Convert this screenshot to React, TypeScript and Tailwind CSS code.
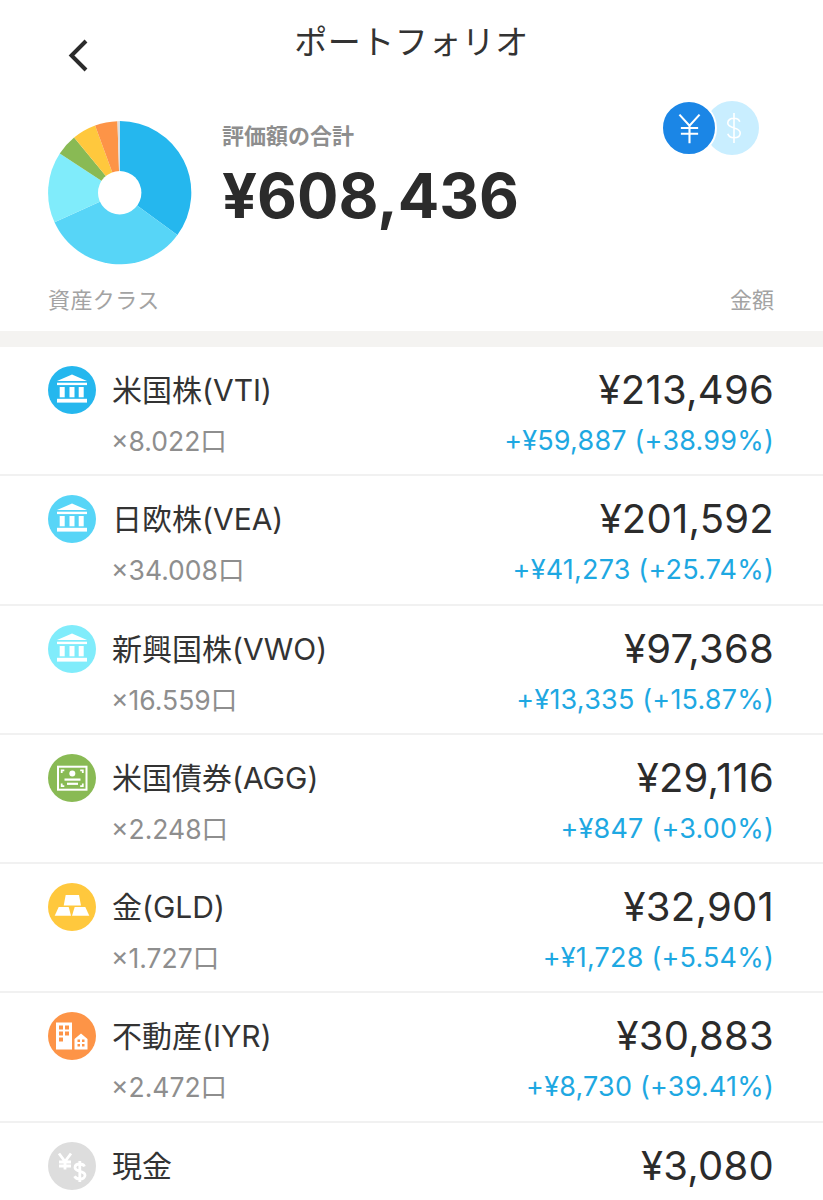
const FONT = "font-['Inter','Noto_Sans_CJK_JP',sans-serif]";

function polar(r: number, pct: number) {
  const a = (pct / 100) * 2 * Math.PI;
  return [r * Math.sin(a), -r * Math.cos(a)];
}

function Pie() {
  const slices: [number, string][] = [
    [35.09, "#25b7ee"],
    [33.13, "#57d5f7"],
    [16.0, "#80ecfb"],
    [4.79, "#89ba54"],
    [5.41, "#ffc83d"],
    [5.08, "#fd9447"],
    [0.5, "#dddddd"],
  ];
  const R = 71.6;
  let acc = 0;
  return (
    <svg width="144" height="144" viewBox="-71.700 -71.700 144 144" className="shrink-0">
      {slices.map(([p, c]) => {
        const [x1, y1] = polar(R, acc);
        acc += p;
        const [x2, y2] = polar(R, acc);
        return <path key={c} d={`M0 0L${x1} ${y1}A${R} ${R} 0 ${p > 50 ? 1 : 0} 1 ${x2} ${y2}Z`} fill={c} />;
      })}
      <circle r="21.7" fill="#fff" />
    </svg>
  );
}

function Bank() {
  return (
    <svg viewBox="0 0 48 48" className="w-12 h-12" fill="#fff">
      <path d="M24 8.500 L39 15 H9Z" />
      <rect x="9" y="16.700" width="30" height="2.400" />
      <rect x="11.700" y="21" width="5" height="10.300" />
      <rect x="21.500" y="21" width="5" height="10.300" />
      <rect x="30.700" y="21" width="5" height="10.300" />
      <rect x="9" y="32.800" width="30" height="3.800" />
    </svg>
  );
}
function Bond() {
  return (
    <svg viewBox="0 0 48 48" className="w-12 h-12">
      <rect x="10" y="12.700" width="28.500" height="23" fill="none" stroke="#fff" strokeWidth="2" />
      <path d="M12.800 15.500h3.500v1.800h-1.700V19h-1.800zM35.700 15.500h-3.500v1.800h1.700V19h1.800zM12.800 33h3.500v-1.800h-1.700v-1.700h-1.800zM35.700 33h-3.500v-1.800h1.700v-1.700h1.800z" fill="#fff" />
      <circle cx="24.300" cy="19.500" r="3" fill="#fff" />
      <rect x="16.500" y="24.500" width="16" height="2.200" fill="#fff" />
      <rect x="19" y="28.700" width="11" height="2.200" fill="#fff" />
    </svg>
  );
}
function Gold() {
  return (
    <svg viewBox="0 0 48 48" className="w-12 h-12" fill="#fff">
      <path d="M17.700 12h13.300l2 10.500H15.700z" />
      <path d="M10.700 24h10l2.300 8.700H6.700z" />
      <path d="M26.700 24h10.600l4 8.700H24z" />
    </svg>
  );
}
function Estate() {
  return (
    <svg viewBox="0 0 48 48" className="w-12 h-12">
      <path fillRule="evenodd" fill="#fff" d="M8 10.500h16v27H8zM11 13.500v4h4v-4zM17 13.500v4h4v-4zM11 19.500v4h4v-4zM17 19.500v4h4v-4zM11 25.500v4h4v-4z" />
      <path fillRule="evenodd" fill="#fff" d="M26.500 27l6.500-5.500 6.500 5.500v10.500h-13zM29.500 27.500v2.500h2.500v-2.500zM34 27.500v2.500h2.500v-2.500zM29.500 32v2.500h2.500V32zM34 32v2.500h2.500V32z" />
    </svg>
  );
}
function Cash() {
  return (
    <svg viewBox="0 0 48 48" className="w-12 h-12" fill="none" stroke="#fff" strokeWidth="2.800">
      <path d="M11 11.500l6 8 6-8M17 19v8.500M11 20h12M11 24h12" />
      <path d="M36.500 24.500c-.8-1.700-2.800-2.500-4.700-2.500-2.800 0-4.800 1.400-4.800 3.600 0 4.900 10 2.600 10 7.600 0 2.400-2.300 3.800-5 3.800-2.500 0-4.500-1-5.500-2.800M31.800 19v21" />
    </svg>
  );
}

function Row(props: {
  bg: string;
  icon: React.ReactNode;
  name: string;
  qty?: string;
  price: string;
  change?: string;
  last?: boolean;
}) {
  return (
    <div className={`flex justify-between pl-12 pr-[49px] pt-[8px] h-[129.25px] ${props.last ? "" : "border-b-2 border-[#f1f1f1]"}`}>
      <div className="flex flex-col">
        <div className="flex items-center gap-4 mt-[11px] h-12">
          <div className={`w-12 h-12 rounded-full ${props.bg}`}>{props.icon}</div>
          <span className="text-[30px] leading-none text-[#333]">{props.name}</span>
        </div>
        {props.qty && <div className="pl-16 mt-[9px] -ml-[1px] text-[26.5px] leading-[36px] text-[#8e8e8e]">{props.qty}</div>}
      </div>
      <div className="flex flex-col items-end">
        <div className="text-[40px] leading-[56px] mt-[7px] text-[#2b2b2b] tracking-[0.25px]">{props.price}</div>
        {props.change && <div className="mt-[5px] text-[27px] leading-[36px] text-[#1ea8e2] tracking-[0.2px]">{props.change}</div>}
      </div>
    </div>
  );
}

export default function App() {
  return (
    <div className={`w-[823px] h-[1200px] overflow-hidden bg-white ${FONT}`}>
      <header className="relative h-[100px]">
        <svg className="absolute left-[67px] top-[39px]" width="22" height="33" viewBox="0 0 22 33" fill="none" stroke="#2b2b2b" strokeWidth="4">
          <path d="M19 2 L4.500 16.500 L19 31" />
        </svg>
        <h1 className="pt-[22px] text-center text-[33px] leading-[40px] font-normal text-[#333] tracking-[0.5px]">ポートフォリオ</h1>
      </header>
      <section className="flex pl-12 pr-[64px] h-[172px]">
        <div className="pt-[21px]"><Pie /></div>
        <div className="ml-[30px] flex-1 pt-[21px]">
          <div className="text-[22px] leading-[30px] font-bold text-[#8e8e8e]">評価額の合計</div>
          <div className="text-[61.5px] leading-[76px] font-bold text-[#2b2b2b] mt-[7px]">¥608,436</div>
        </div>
        <div className="flex pt-[1px] h-[56px]">
          <div className="relative w-[98px] h-[54px]">
            <div className="absolute right-0 top-0 w-[54px] h-[54px] rounded-full bg-[#c9eeff] flex items-center justify-center pl-[3px]">
              <svg width="16" height="34" viewBox="0 0 18 36" fill="none" stroke="#fff" strokeWidth="1.800">
                <path d="M15.500 11c-1-3-3.500-4-6.500-4-4 0-7 2-7 5.500 0 7 14 4 14 11 0 3.500-3 5.500-7 5.500-3.500 0-6-1.500-7-4.500M9 1v34" />
              </svg>
            </div>
            <div className="absolute left-0 top-[-1px] w-[56px] h-[56px] rounded-full bg-[#1b86e6] border-2 border-white flex items-center justify-center">
              <svg width="23" height="31" viewBox="0 0 24 32" fill="none" stroke="#fff" strokeWidth="2.200">
                <path d="M1.500 1.500 L12 13 L22.500 1.500M12 13V31.500M3 15.500H21M3 21.500H21" />
              </svg>
            </div>
          </div>
        </div>
      </section>
      <div className="flex justify-between pl-12 pr-[49px] h-[59px] pt-[13px] text-[22px] leading-[30px] text-[#a3a3a3]">
        <span className="tracking-[0.4px]">資産クラス</span>
        <span>金額</span>
      </div>
      <div className="h-4 bg-[#f4f3f1]" />
      <Row bg="bg-[#25b7ee]" icon={<Bank />} name="米国株(VTI)" qty="×8.022口" price="¥213,496" change="+¥59,887 (+38.99%)" />
      <Row bg="bg-[#57d5f7]" icon={<Bank />} name="日欧株(VEA)" qty="×34.008口" price="¥201,592" change="+¥41,273 (+25.74%)" />
      <Row bg="bg-[#80ecfb]" icon={<Bank />} name="新興国株(VWO)" qty="×16.559口" price="¥97,368" change="+¥13,335 (+15.87%)" />
      <Row bg="bg-[#89ba54]" icon={<Bond />} name="米国債券(AGG)" qty="×2.248口" price="¥29,116" change="+¥847 (+3.00%)" />
      <Row bg="bg-[#ffc83d]" icon={<Gold />} name="金(GLD)" qty="×1.727口" price="¥32,901" change="+¥1,728 (+5.54%)" />
      <Row bg="bg-[#fd9447]" icon={<Estate />} name="不動産(IYR)" qty="×2.472口" price="¥30,883" change="+¥8,730 (+39.41%)" />
      <Row bg="bg-[#dddddd]" icon={<Cash />} name="現金" price="¥3,080" last />
    </div>
  );
}
